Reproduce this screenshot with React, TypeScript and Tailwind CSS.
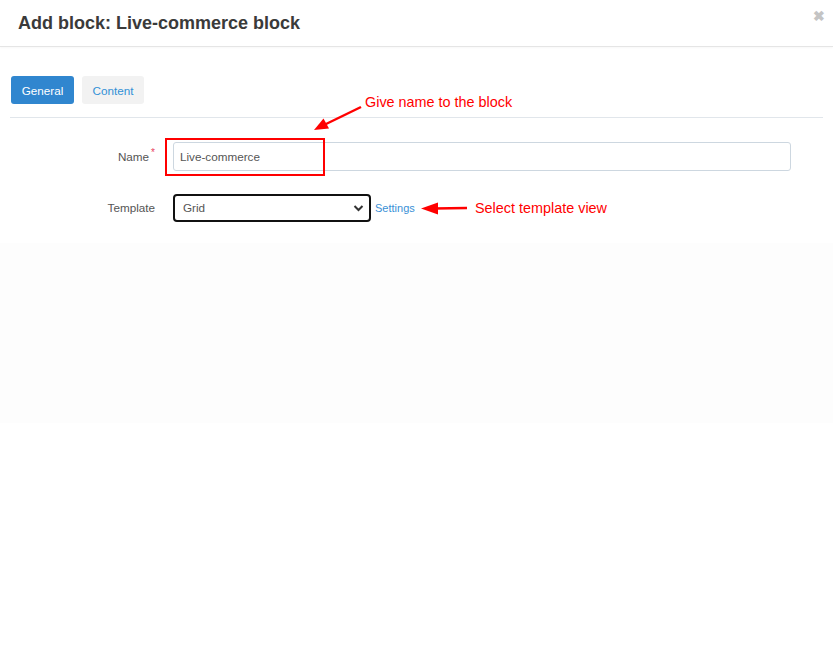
export default function App() {
  return (
    <div className="relative h-[669px] w-full bg-white font-['Liberation_Sans',Arial,sans-serif] text-[#333]">
      {/* header */}
      <div className="flex h-[47px] items-center justify-between border-b border-[#e5e5e5] pl-[18px] pr-[8px] shadow-[0_1px_2px_rgba(0,0,0,0.03)]">
        <h1 className="text-[18px] font-bold leading-none text-[#3a3a3a]">Add block: Live-commerce block</h1>
        <span className="-mt-[14px] text-[14px] font-bold leading-none text-[#c4c4c4]">✖</span>
      </div>

      {/* tabs */}
      <div className="px-[11px] pt-[29px]">
        <div className="flex gap-2">
          <button className="h-[28px] w-[63px] rounded-[3px] bg-[#3086cf] pt-[1px] text-[11.7px] text-white">General</button>
          <button className="h-[28px] w-[62px] rounded-[3px] bg-[#f2f2f2] pt-[1px] text-[11.7px] text-[#3190d6]">Content</button>
        </div>
      </div>
      <div className="mx-[10px] mt-[13px] border-t border-[#e1e6eb]" />

      {/* form */}
      <div className="pt-[24px] pb-[21px]">
        <div className="flex items-center">
          <div className="w-[155px] text-right text-[11.7px] text-[#555]">
            Name<sup className="ml-[2px] text-[10px] text-[#e8425e]">*</sup>
          </div>
          <div className="ml-[18px] flex h-[29px] w-[618px] items-center rounded-[3px] border border-[#cdd7e0] px-[6px] text-[11.7px] text-[#555]">
            Live-commerce
          </div>
        </div>
        <div className="mt-[23px] flex items-center">
          <div className="w-[155px] text-right text-[11.7px] text-[#555]">Template</div>
          <div className="ml-[18px] flex h-[28px] w-[198px] items-center justify-between rounded-[4px] border-2 border-[#111] pl-[8px] pr-[5px] text-[11.7px] text-[#555]">
            <span>Grid</span>
            <svg width="11" height="8" viewBox="0 0 11 8">
              <path d="M1.5 2 L5.5 6 L9.5 2" fill="none" stroke="#333" strokeWidth="2" />
            </svg>
          </div>
          <a className="ml-[4px] text-[11px] text-[#3a90d6]">Settings</a>
        </div>
      </div>

      {/* faint lower panel */}
      <div className="h-[180px] bg-[#fdfdfd]" />

      {/* annotations */}
      <div className="absolute left-[165px] top-[138px] h-[38px] w-[160px] border-2 border-[#f00]" />
      <span className="absolute left-[365px] top-[93px] text-[14.4px] leading-[18px] text-[#f00]">Give name to the block</span>
      <span className="absolute left-[475px] top-[199px] text-[14.4px] leading-[18px] text-[#f00]">Select template view</span>
      <svg className="pointer-events-none absolute left-0 top-0" width="833" height="669">
        <line x1="361" y1="107" x2="324" y2="125" stroke="#f00" strokeWidth="2.5" />
        <polygon points="314,130 329,128.5 323.5,118.5" fill="#f00" />
        <line x1="467" y1="208" x2="434" y2="208.5" stroke="#f00" strokeWidth="2.5" />
        <polygon points="421,208.5 438,202.5 438,214.5" fill="#f00" />
      </svg>
    </div>
  );
}
